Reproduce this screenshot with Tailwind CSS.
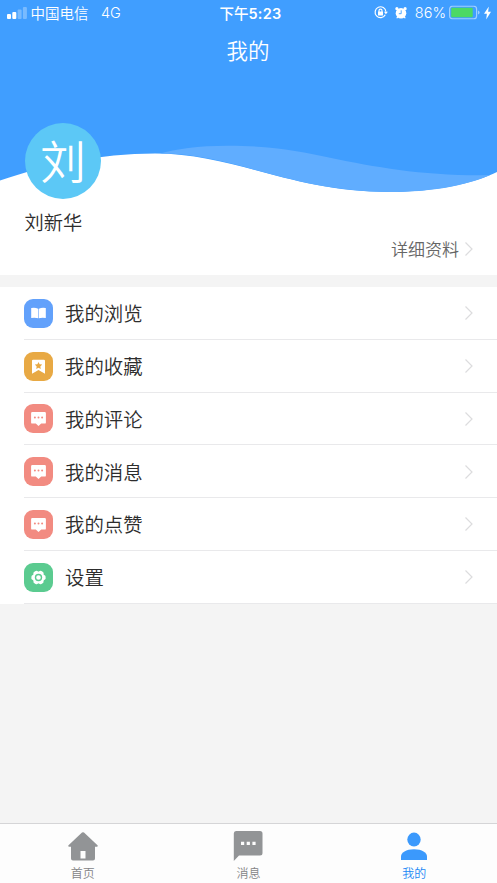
<!DOCTYPE html>
<html lang="zh-CN">
<head>
<meta charset="utf-8">
<meta name="viewport" content="width=device-width, initial-scale=1">
<title>我的</title>
<script src="https://cdn.jsdelivr.net/npm/@tailwindcss/browser@4"></script>
</head>
<body class="bg-[#f4f4f4] font-['Noto_Sans_CJK_SC',sans-serif] font-[350] text-[#2d2d2d]">
<svg class="hidden">
  <symbol id="chevron" viewBox="0 0 10 16"><path d="M1.500 1.500 8 8l-6.500 6.500" fill="none" stroke="#dcdcde" stroke-width="1.200"/></symbol>
  <symbol id="bubble" viewBox="0 0 29 29"><path d="M8.300 8h12.400a1.200 1.200 0 0 1 1.200 1.200v9.200a1.200 1.200 0 0 1-1.200 1.200h-3.500L14.500 22l-2.700-2.400H8.300a1.200 1.200 0 0 1-1.200-1.200V9.200A1.200 1.200 0 0 1 8.300 8Z" fill="#fff"/><g fill="#f28b81"><circle cx="10.900" cy="13.500" r="1"/><circle cx="14.500" cy="13.500" r="1"/><circle cx="18.100" cy="13.500" r="1"/></g></symbol>
</svg>
<div class="flex h-[883px] w-[497px] flex-col overflow-hidden">
  <header class="relative h-[275px] shrink-0 bg-white">
    <svg class="absolute inset-0 h-[275px] w-[497px]" viewBox="0 0 497 275">
      <path d="M0 0H497V172C475 183 435 192 390 192C290 192 235 153.500 155 153.500C100 153.500 45 165 0 180.500Z" fill="#409eff"/>
      <path d="M160 153.600C175 149 198 145.700 228 145.700C270 145.700 302 151.500 330 157.700C375 167 420 175.200 480 175.200L490 175C465 186 430 192 390 192C290 192 235 153.500 160 153.600Z" fill="#60adff"/>
    </svg>
    <div class="relative flex h-[26px] items-center text-[14.500px] leading-[26px] text-white">
      <div class="flex flex-1 items-center pl-[7px]">
        <svg class="mr-[3.500px] h-[12px] w-[20px]" viewBox="0 0 20 12" fill="#fff"><rect x="0" y="7" width="4" height="5" rx="1"/><rect x="5.300" y="5" width="4" height="7" rx="1"/><rect x="10.600" y="2.500" width="4" height="9.500" rx="1" opacity=".3"/><rect x="15.900" width="4" height="12" rx="1" opacity=".3"/></svg>
        <span>中国电信</span><span class="ml-[12.500px] font-['Inter'] font-[350]">4G</span>
      </div>
      <div class="absolute left-[219.500px] whitespace-nowrap font-medium">下午<span class="font-['Inter'] font-semibold tracking-[.2px]">5:23</span></div>
      <div class="flex items-center pr-[6px]">
        <svg class="mr-[7.500px] h-[14px] w-[14px] -translate-y-[.5px]" viewBox="0 0 14 14" fill="none" stroke="#fff" stroke-width="1.200"><path d="M11.300 9.200A5.400 5.400 0 1 1 11.900 6.300"/><path d="M9.900 6.200h4l-2 2.600Z" fill="#fff" stroke="none"/><rect x="4" y="6.100" width="5" height="3.800" rx=".5" fill="#fff" stroke="none"/><path d="M5 6.500V5.200a1.500 1.500 0 0 1 3 0v1.300"/></svg>
        <svg class="mr-[7.500px] h-[13px] w-[12px] -translate-y-[.5px]" viewBox="0 0 12 13"><g fill="#fff"><circle cx="6" cy="6.800" r="5.300"/><circle cx="1.900" cy="2.200" r="1.600"/><circle cx="10.100" cy="2.200" r="1.600"/><path d="m2.200 10-.9 1.600.8.500 1.400-1.300zm7.600 0 .9 1.600-.8.500-1.400-1.300z"/></g><path d="M6.200 3.800v3.400H3.800" fill="none" stroke="#409eff" stroke-width=".9"/></svg>
        <span class="mr-[3px] font-['Inter'] text-[14.500px] font-[350]">86%</span>
        <svg class="mr-[4px] h-[14px] w-[31px] -translate-y-[.5px]" viewBox="0 0 31 14"><rect x=".6" y=".6" width="27" height="12.800" rx="3" fill="none" stroke="#fff" stroke-opacity=".5" stroke-width="1.200"/><rect x="2.200" y="2.200" width="21.500" height="9.600" rx="1" fill="#4cd964"/><path d="M29 5q1.600.5 1.600 2T29 9Z" fill="#fff" fill-opacity=".5"/></svg>
        <svg class="h-[13px] w-[7px] -translate-y-[.5px]" viewBox="0 0 8 13" preserveAspectRatio="none"><path d="M5.500 0 0 7.300h3.300L2.500 13 8 5.300H4.700Z" fill="#fff"/></svg>
      </div>
    </div>
    <h1 class="relative h-[48px] pr-[1px] text-center text-[21.500px] leading-[48px] text-white">我的</h1>
    <div class="relative mt-[49px] ml-[25px] flex h-[76px] w-[76px] items-center justify-center rounded-full bg-[#5cc8f6] pb-[3px] text-[45.500px] leading-none text-white">刘</div>
    <div class="relative ml-[24.500px] h-[32px] pt-[8px] text-[19.300px] leading-[30px]">刘新华</div>
    <div class="relative mt-[4px] flex h-[28px] items-center justify-end pr-[23px] text-[17px] leading-[28px] text-[#666]">详细资料<svg class="ml-[5px] h-[16px] w-[10px]"><use href="#chevron"/></svg></div>
  </header>
  <main class="mt-[12px] bg-white text-[19.400px] leading-[28px]">
    <div class="ml-6 flex h-[52.750px] items-center border-b border-[#e9e9eb] pt-[1px] pr-[23px]"><svg class="mr-[12px] h-[29px] w-[29px] rounded-[9px] bg-[#62a1fb]" viewBox="0 0 29 29"><path d="M14.200 9.700q-3.300-1.600-7-.7v10.100q3.700-.7 7 .2Zm.6 0q3.300-1.600 7-.7v10.100q-3.700-.7-7 .2Z" fill="#fff"/></svg><span class="flex-1">我的浏览</span><svg class="h-[16px] w-[10px]"><use href="#chevron"/></svg></div>
    <div class="ml-6 flex h-[52.750px] items-center border-b border-[#e9e9eb] pt-[1px] pr-[23px]"><svg class="mr-[12px] h-[29px] w-[29px] rounded-[9px] bg-[#e8a944]" viewBox="0 0 29 29"><path d="M9.100 7.700h10.800q1.100 0 1.100 1.100v13l-6.500-3.800L8 21.800v-13q0-1.100 1.100-1.100Z" fill="#fff"/><path d="m14.500 10 1.100 2.200 2.600.4-1.900 1.800.5 2.600-2.300-1.300-2.300 1.300.5-2.600-1.900-1.800 2.600-.4Z" fill="#e8a944"/></svg><span class="flex-1">我的收藏</span><svg class="h-[16px] w-[10px]"><use href="#chevron"/></svg></div>
    <div class="ml-6 flex h-[52.750px] items-center border-b border-[#e9e9eb] pt-[1px] pr-[23px]"><svg class="mr-[12px] h-[29px] w-[29px] rounded-[9px] bg-[#f28b81]"><use href="#bubble"/></svg><span class="flex-1">我的评论</span><svg class="h-[16px] w-[10px]"><use href="#chevron"/></svg></div>
    <div class="ml-6 flex h-[52.750px] items-center border-b border-[#e9e9eb] pt-[1px] pr-[23px]"><svg class="mr-[12px] h-[29px] w-[29px] rounded-[9px] bg-[#f28b81]"><use href="#bubble"/></svg><span class="flex-1">我的消息</span><svg class="h-[16px] w-[10px]"><use href="#chevron"/></svg></div>
    <div class="ml-6 flex h-[52.750px] items-center border-b border-[#e9e9eb] pt-[1px] pr-[23px]"><svg class="mr-[12px] h-[29px] w-[29px] rounded-[9px] bg-[#f28b81]"><use href="#bubble"/></svg><span class="flex-1">我的点赞</span><svg class="h-[16px] w-[10px]"><use href="#chevron"/></svg></div>
    <div class="ml-6 flex h-[52.750px] items-center border-b border-[#e9e9eb] pt-[1px] pr-[23px]"><svg class="mr-[12px] h-[29px] w-[29px] rounded-[9px] bg-[#5bcb90]" viewBox="0 0 29 29"><g fill="#fff"><circle cx="14.500" cy="14.500" r="6.100"/><rect x="7.400" y="12" width="14.200" height="5" rx="1.800"/><rect x="7.400" y="12" width="14.200" height="5" rx="1.800" transform="rotate(60 14.500 14.500)"/><rect x="7.400" y="12" width="14.200" height="5" rx="1.800" transform="rotate(120 14.500 14.500)"/></g><circle cx="14.500" cy="14.500" r="3" fill="none" stroke="#5bcb90" stroke-width="1.400"/></svg><span class="flex-1">设置</span><svg class="h-[16px] w-[10px]"><use href="#chevron"/></svg></div>
  </main>
  <nav class="mt-auto grid h-[60px] grid-cols-3 border-t border-[#d5d5d7] bg-[#fdfdfd] text-[12px] leading-[16px] text-[#838486]">
    <a class="flex flex-col items-center pt-[7px]"><svg class="h-[30px] w-[30px]" viewBox="0 0 30 30"><path d="M14 1.600q1-.8 2 0l13.500 12.700q.8 1.400-.7 1.400H27v11.800q0 2-2 2H5q-2 0-2-2V15.700H1.200q-1.500 0-.7-1.400ZM12.500 20v7.500h5V20Z" fill="#929496" fill-rule="evenodd"/></svg><span class="mt-[4px]">首页</span></a>
    <a class="flex flex-col items-center pt-[7px]"><svg class="h-[30px] w-[30px]" viewBox="0 0 30 30"><path d="M3 0h24q2.500 0 2.500 2.500v19.500q0 2.500-2.500 2.500H6L.8 30V2.500Q.8 0 3 0ZM8 10.700v3.200h3.200v-3.200Zm5.700 0v3.200h3.200v-3.200Zm5.700 0v3.200h3.200v-3.200Z" fill="#929496" fill-rule="evenodd"/></svg><span class="mt-[4px]">消息</span></a>
    <a class="flex flex-col items-center pt-[7px] text-[#2087f5]"><svg class="h-[30px] w-[30px]" viewBox="0 0 30 30" fill="#3b99fc"><ellipse cx="15" cy="8.600" rx="6.700" ry="7"/><path d="M2 29v-3.500C2 21.500 7 18.200 15 18.200s13 3.300 13 7.300V29Z"/></svg><span class="mt-[4px]">我的</span></a>
  </nav>
</div>
</body>
</html>
